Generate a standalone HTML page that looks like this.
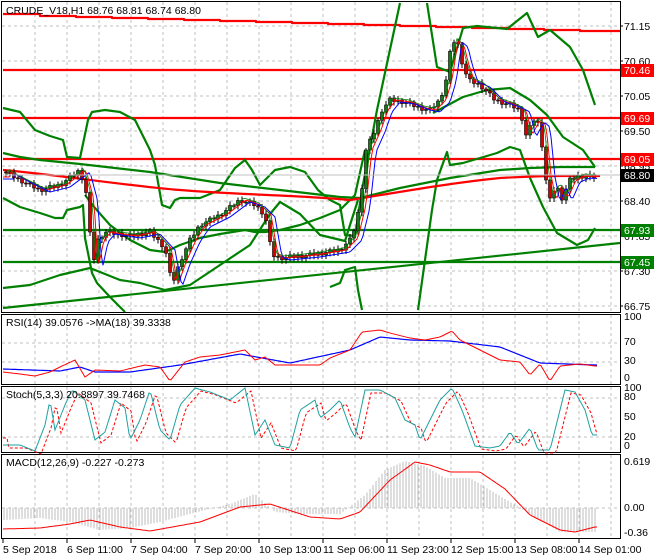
<!DOCTYPE html><html><head><meta charset="utf-8"><style>
html,body{margin:0;padding:0;background:#fff;width:660px;height:560px;overflow:hidden}
svg{display:block;font-family:"Liberation Sans",sans-serif;font-size:10.5px}
</style></head><body>
<svg id="s" width="660" height="560" xmlns="http://www.w3.org/2000/svg">
<rect width="660" height="560" fill="#fff"/>
<g id="grid" stroke="#c0c0c0" stroke-dasharray="3,3" stroke-width="1"></g>
<g fill="none" stroke-width="2.2" stroke-linejoin="round">
<polyline stroke="#ff0000" points="3,14 40,14 40,16 76,16 76,17 112,17 112,18 148,18 148,19 184,19 184,20 220,20 220,21 256,21 256,22 292,22 292,23 328,23 328,24 364,24 364,25 400,25 400,26 436,26 436,27 472,27 472,28 508,28 508,29 544,29 544,30 580,30 580,31 620,31"/>
<line stroke="#ff0000" x1="3" y1="70" x2="620" y2="70"/>
<line stroke="#ff0000" x1="3" y1="118" x2="620" y2="118"/>
<line stroke="#ff0000" x1="3" y1="159" x2="620" y2="159"/>
<line stroke="#008000" x1="3" y1="230" x2="620" y2="230"/>
<line stroke="#008000" x1="3" y1="262" x2="620" y2="262"/>
<line stroke="#008000" x1="3" y1="308" x2="620" y2="243"/>
<g stroke="#008000">
<polyline points="3,108 20,112 35,130 50,136 63,140 67,157 80,158 88,120 92,112 105,110 120,112 135,120 150,150 155,165 162,205 170,208 175,200 180,198 200,198 220,190 235,168 245,160 252,170 260,185 275,170 290,167 305,172 318,190 330,200 340,205 345,235 355,236 362,190 377,110 400,3"/>
<polyline points="3,198 20,207 40,213 55,218 63,218 67,210 80,207 83,205 85,238 92,273 97,283 110,297 120,307 125,312"/>
<polyline points="85,195 95,208 110,225 130,240 150,250 165,252 180,245 200,238 220,234 245,230 255,232 265,232 280,230 300,225 320,218 340,210 355,195 365,150"/>
<polyline points="165,290 190,285 220,265 250,245 270,214 280,202 300,214 320,235 345,241 350,225 358,200"/>
<polyline points="3,153 20,157 40,160 80,164 150,172 220,183 280,190 340,197 360,198 400,188 450,178 500,170 530,168 560,167 595,167"/>
<polyline points="3,288 30,285 60,275 90,268 100,272 120,280 140,283 165,290"/>
<polyline points="330,287 340,283 345,270 355,267 358,290 362,310"/>
<polyline points="427,3 437,67 450,72 463,28 477,26 507,29 527,13 538,37 550,30 570,47 583,70 595,105"/>
<polyline points="418,310 425,260 432,210 437,180 447,152 450,165 463,163 497,153 510,147 520,150 530,178 543,207 557,233 577,245 588,240 595,228"/>
<polyline points="433,113 463,97 487,90 510,88 530,100 547,115 563,137 583,150 595,167"/>
</g>
</g>
<g fill="none" stroke-width="2.2">
<path stroke="#ff0000" d="M3,170 C60,175 120,185 180,190 C240,195 300,195 350,200 C400,192 450,183 500,178 C550,175 580,176 600,176"/>
</g>
<g id="price"></g>
<g id="frames" fill="none" stroke="#000" stroke-width="1">
<rect x="1.5" y="1.5" width="619" height="311"/>
<rect x="1.5" y="314.5" width="619" height="70"/>
<rect x="1.5" y="386.5" width="619" height="66"/>
<rect x="1.5" y="454.5" width="619" height="84"/>
</g>
<g id="sub"></g>
<text x="6" y="14" fill="#000">CRUDE_V18,H1  68.76 68.81 68.74 68.80</text>
<text x="6" y="326">RSI(14) 39.0576  -&gt;MA(18) 39.3338</text>
<text x="6" y="398">Stoch(5,3,3) 20.8897 39.7468</text>
<text x="6" y="466">MACD(12,26,9) -0.227 -0.273</text>
<g id="axis" fill="#000"></g>
</svg>
<script>
var S='http://www.w3.org/2000/svg';
function el(p,t,a,txt){var e=document.createElementNS(S,t);for(var k in a)e.setAttribute(k,a[k]);if(txt!=null)e.textContent=txt;document.getElementById(p).appendChild(e);return e;}
function interp(pts,x){for(var i=0;i<pts.length-1;i++){if(x>=pts[i][0]&&x<=pts[i+1][0]){var t=(x-pts[i][0])/(pts[i+1][0]-pts[i][0]);return pts[i][1]+t*(pts[i+1][1]-pts[i][1]);}}return pts[pts.length-1][1];}
for(var x=35;x<620;x+=32){el('grid','line',{x1:x,y1:2,x2:x,y2:312});el('grid','line',{x1:x,y1:315,x2:x,y2:384});el('grid','line',{x1:x,y1:387,x2:x,y2:452});el('grid','line',{x1:x,y1:455,x2:x,y2:538});}
[26,61,96,131,166,201,236,271,306].forEach(function(y){el('grid','line',{x1:2,y1:y,x2:620,y2:y});});
[343,362,398,437,508].forEach(function(y){el('grid','line',{x1:2,y1:y,x2:620,y2:y});});
var P=[[5,172],[20,180],[40,190],[60,185],[80,170],[88,200],[92,268],[98,240],[105,232],[130,236],[150,232],[165,248],[172,285],[180,262],[190,240],[200,225],[220,215],[240,200],[255,205],[265,215],[272,255],[280,258],[310,255],[340,250],[352,238],[360,205],[366,150],[375,130],[382,110],[390,100],[405,102],[420,108],[430,110],[440,100],[446,80],[452,40],[458,45],[462,62],[468,80],[480,85],[495,100],[510,105],[520,110],[526,135],[534,120],[540,125],[545,175],[550,200],[556,185],[562,198],[570,180],[580,176],[595,177]];
var prev=interp(P,5);
for(var x=6;x<=596;x+=4){var c=interp(P,x)+((x*7)%5-2);var o=prev;var hi=Math.min(o,c)-2-(x%3),lo=Math.max(o,c)+2+(x%4);
el('price','line',{x1:x,y1:hi,x2:x,y2:lo,stroke:'#000','stroke-width':1});
el('price','rect',{x:x-1.5,y:Math.min(o,c),width:3,height:Math.max(1,Math.abs(c-o)),fill:c<o?'#1a7a1a':'#d40000',stroke:'#000','stroke-width':0.6});prev=c;}
function line(g,pts,col,w,dash){var s='';for(var x=3;x<=598;x+=2){s+=x+','+interp(pts,x).toFixed(1)+' ';}var a={points:s,fill:'none',stroke:col,'stroke-width':w};if(dash)a['stroke-dasharray']=dash;el(g,'polyline',a);}
function shift(pts,d,k){return pts.map(function(p){return [p[0]+d,p[1]+k];});}
line('price',shift(P,6,0),'#ff0000',1);line('price',shift(P,10,2),'#0000ff',1);line('price',shift(P,4,-2),'#008000',0.8);
var R=[[3,372],[20,374],[35,376],[50,372],[60,367],[75,360],[85,377],[95,370],[120,371],[145,365],[160,367],[170,381],[185,362],[200,357],[220,355],[245,350],[255,360],[265,357],[275,365],[290,365],[320,365],[330,358],[350,350],[362,332],[380,330],[390,333],[410,338],[425,340],[440,337],[452,331],[460,340],[480,350],[500,360],[520,362],[530,375],[540,364],[550,381],[560,366],[580,364],[595,366]];
var RM=[[3,369],[60,371],[80,367],[95,372],[130,372],[180,365],[240,354],[290,363],[350,350],[380,337],[410,340],[450,341],[500,347],[540,363],[595,365]];
line('sub',RM,'#0000ff',1.2);line('sub',R,'#ff0000',1);
var K=[[3,445],[20,445],[35,451],[45,425],[50,400],[55,430],[65,405],[72,390],[85,400],[95,440],[105,432],[115,400],[125,408],[130,440],[140,420],[150,390],[160,430],[170,440],[180,405],[195,388],[210,392],[230,400],[245,388],[255,435],[265,420],[275,445],[290,448],[300,410],[315,400],[320,418],[330,410],[340,400],[350,428],[355,437],[365,390],[380,390],[395,398],[405,420],[415,425],[420,440],[430,420],[440,400],[452,388],[462,410],[475,446],[490,448],[500,446],[510,432],[518,444],[530,428],[538,450],[550,450],[565,390],[575,392],[585,410],[592,435]];
line('sub',shift(K,6,3),'#ff0000',1,'3,2');line('sub',K,'#20a0a0',1);
var H=[[3,520],[40,518],[70,522],[100,530],[130,528],[160,522],[190,514],[230,504],[255,494],[275,512],[300,514],[340,514],[365,495],[385,470],[405,461],[425,466],[445,478],[470,478],[490,490],[520,508],[540,520],[560,532],[596,532]];
for(var x=4;x<=596;x+=3){var y=interp(H,x);el('sub','line',{x1:x,y1:508,x2:x,y2:y,stroke:'#bdbdbd','stroke-width':1});}
var SG=[[3,529],[40,528],[70,524],[90,520],[120,527],[150,531],[200,522],[240,507],[270,504],[310,517],[340,519],[360,512],[390,480],[415,462],[430,465],[450,472],[480,472],[505,489],[530,515],[560,530],[575,532],[595,527]];
line('sub',SG,'#ff0000',1);
[[71.15,26],[70.60,61],[70.05,96],[69.50,131],[68.95,166],[68.40,201],[67.85,236],[67.30,271],[66.75,306]].forEach(function(a){el('axis','text',{x:624,y:a[1]+4},a[0].toFixed(2));el('axis','line',{x1:620,y1:a[1],x2:623,y2:a[1],stroke:'#000'});});
[['100',320],['70',345],['30',364],['0',381],['100',391],['80',400],['50',420],['20',440],['0',449],['0.619',465],['0.00',511],['-0.36',536]].forEach(function(a){el('axis','text',{x:624,y:a[1]},a[0]);});
[['70.46',70,'#ff0000'],['69.69',118,'#ff0000'],['69.05',159,'#ff0000'],['68.80',175,'#000'],['67.93',230,'#008000'],['67.45',262,'#008000']].forEach(function(a){el('axis','rect',{x:621,y:a[1]-6,width:33,height:13,fill:a[2]});el('axis','text',{x:624,y:a[1]+4,fill:'#fff'},a[0]);});
el('axis','line',{x1:3,y1:175,x2:620,y2:175,stroke:'#c0c0c0','stroke-width':1});
var D=['5 Sep 2018','6 Sep 11:00','7 Sep 04:00','7 Sep 20:00','10 Sep 13:00','11 Sep 06:00','11 Sep 23:00','12 Sep 15:00','13 Sep 08:00','14 Sep 01:00'];
D.forEach(function(d,i){var x=3+i*64;el('axis','line',{x1:x,y1:539,x2:x,y2:543,stroke:'#000'});el('axis','text',{x:x,y:553},d);});
</script>
</body></html>
